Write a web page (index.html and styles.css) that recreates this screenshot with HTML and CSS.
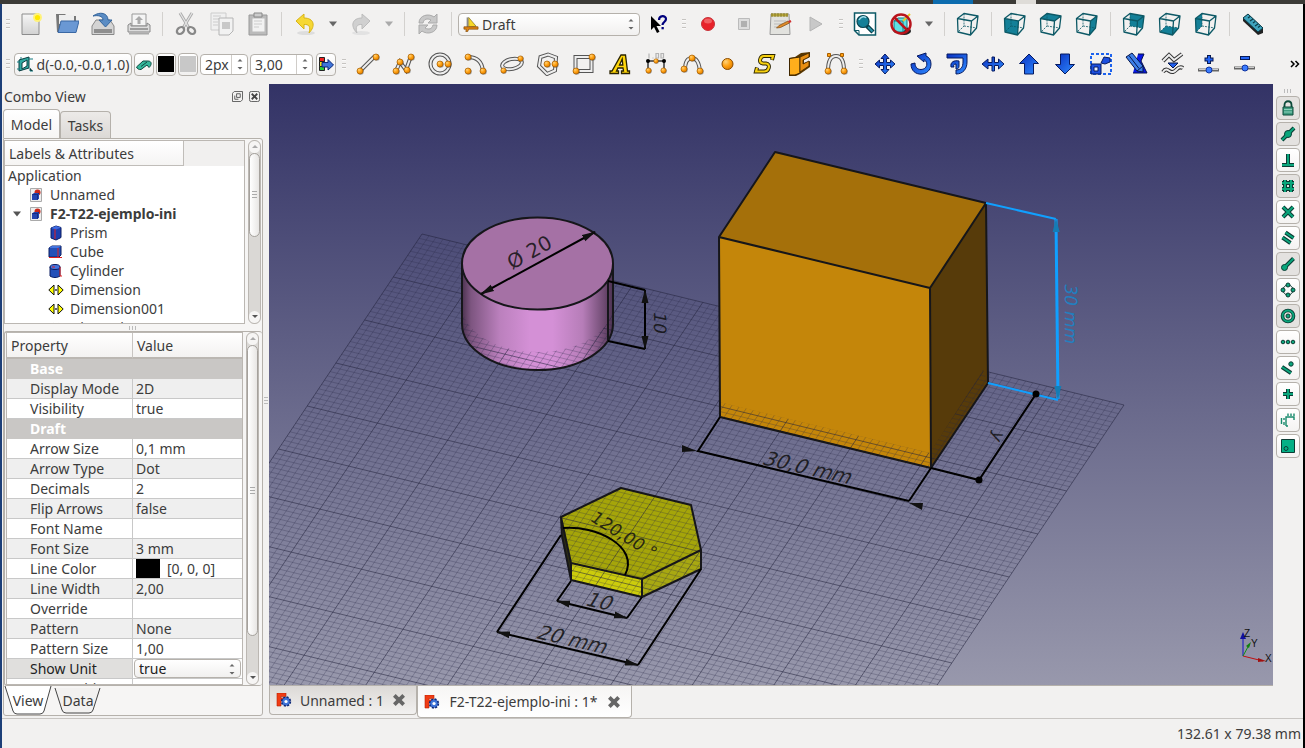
FILE: index.html
```html
<!DOCTYPE html>
<html lang="en">
<head>
<meta charset="utf-8">
<title>FreeCAD</title>
<link rel="stylesheet" href="styles.css">
</head>
<body>
<svg class="defs" aria-hidden="true">
  <defs>
    <radialGradient id="or" cx=".35" cy=".3" r=".8"><stop offset="0" stop-color="#ffd27a"/><stop offset=".5" stop-color="#ffa010"/><stop offset="1" stop-color="#d87800"/></radialGradient>
    <linearGradient id="blu" x1="0" y1="0" x2="1" y2="1"><stop offset="0" stop-color="#0a2fc0"/><stop offset="1" stop-color="#2f8cff"/></linearGradient>
    <linearGradient id="gry" x1="0" y1="0" x2="0" y2="1"><stop offset="0" stop-color="#f6f6f6"/><stop offset="1" stop-color="#d2d2d2"/></linearGradient>
    <linearGradient id="cylS" x1="0" y1="0" x2="1" y2="0"><stop offset="0" stop-color="#4c3350"/><stop offset=".06" stop-color="#7d5580"/><stop offset=".25" stop-color="#bb80bd"/><stop offset=".45" stop-color="#d490d6"/><stop offset=".6" stop-color="#d490d6"/><stop offset=".8" stop-color="#b67db8"/><stop offset=".94" stop-color="#6f4b72"/><stop offset="1" stop-color="#4a3150"/></linearGradient>
    <linearGradient id="sky" x1="0" y1="0" x2="0" y2="1"><stop offset="0" stop-color="#333366"/><stop offset="1" stop-color="#9898ac"/></linearGradient>
    <symbol id="node" viewBox="0 0 8 8"><circle cx="4.600" cy="4.600" r="3.200" fill="#333" opacity=".45"/><circle cx="4" cy="4" r="3" fill="url(#or)" stroke="#a85e00" stroke-width=".7"/></symbol>
    <symbol id="wire" viewBox="0 0 24 24"><path d="M8 1.500V14L2 20M8 14l13 2" fill="none" stroke="#0d5966" stroke-width=".8" stroke-dasharray="2 1"/><path d="M1.500 6.500L8 1.500L22 4L20.500 16L14.500 23L2 20ZM1.500 6.500L15.500 9L22 4M15.500 9L14.500 23" fill="none" stroke="#0d5966" stroke-width="1.300" stroke-linejoin="round"/></symbol>
    <symbol id="doc" viewBox="0 0 14 14"><path d="M1.500.5h11v13h-11z" fill="#eee" stroke="#aaa"/><circle cx="8.500" cy="4.500" r="3" fill="#c8281c"/><path d="M3 6.500l2-1.500h5v5.500L8.500 12H3z" fill="#2444b0"/><path d="M3 6.500h5.500V12M8.500 6.500L10 5" fill="none" stroke="#0d2270" stroke-width=".7"/></symbol>
    <symbol id="dim" viewBox="0 0 16 12"><path d="M6 1v10L.800 6zM10 1v10l5.200-5z" fill="#ff0" stroke="#111"/><path d="M7.200 5.200h1.600v1.600H7.200z"/></symbol>
    <symbol id="fc" viewBox="0 0 16 14"><path d="M1 0h9v3.500H5V5h4v3H5v5H1z" fill="#f03c14" stroke="#b82000" stroke-width=".6"/><circle cx="10" cy="8.500" r="4.200" fill="#2a55c0" stroke="#0c2878" stroke-width="2" stroke-dasharray="2 1.300"/><circle cx="10" cy="8.500" r="3.600" fill="#3f74d8"/><circle cx="10" cy="8.500" r="1.600" fill="#fff"/></symbol>
    <symbol id="x" viewBox="0 0 12 12"><path d="M2 2l8 8M10 2l-8 8" stroke="#666" stroke-width="3.200"/></symbol>
    <symbol id="updown" viewBox="0 0 8 12"><path d="M1.500 3.500L4 1l2.500 2.500zM1.500 9L4 11.500 6.500 9z" fill="#666"/></symbol>
    <symbol id="down" viewBox="0 0 8 6"><path d="M0 .5h8L4 5.500z"/></symbol>
    <path id="k-near" d="M2 14L14 2"/>
    <path id="k-perp" d="M8 2v11M2 13h12"/>
    <path id="k-grid" d="M5 2v12M11 2v12M2 5h12M2 11h12"/>
    <path id="k-int" d="M3 3l10 10M13 3L3 13"/>
    <path id="k-par" d="M5.500 2.500l8 5.500M2.500 7.500l8 5.500"/>
    <path id="k-end" d="M5 11L13.500 2.500"/>
    <path id="k-plus" d="M8 3v10M3 8h10"/>
    <path id="k-ext" d="M2 7l9 6"/>
  </defs>
</svg>
<div class="edge-top"></div>
<div class="frame">
<div class="window">
<header class="bars">
  <div class="bar">
    <span class="grip"></span>
    <button class="tb" aria-label="New"><svg viewBox="0 0 24 24"><path d="M3 2h17v20.500H3z" fill="url(#gry)" stroke="#8c8c8c"/><circle cx="18.500" cy="5.500" r="4.500" fill="#fff27a"/><circle cx="18.500" cy="5.500" r="2.600" fill="#ffe800"/></svg></button>
    <button class="tb" aria-label="Open"><svg viewBox="0 0 24 24"><path d="M1 2h9l2 2h9v16H2z" fill="#777"/><path d="M4 3h15v9H4z" fill="#eee"/><path d="M3 20.500l3-11.500h18l-3 11.500z" fill="#6a98d4" stroke="#3a68a4"/></svg></button>
    <button class="tb" aria-label="Save"><svg viewBox="0 0 24 24"><path d="M1 14l4-6h14l4 6v8.500H1z" fill="#d4d4d4" stroke="#888"/><path d="M3 17h18v4H3z" fill="#8f8f8f"/><path d="M2 4C9-1 17 1 17 8h4l-6.500 7L8 8h4C12 4 7 3 2 4z" fill="#5a8cc4" stroke="#34659c"/></svg></button>
    <button class="tb" aria-label="Print"><svg viewBox="0 0 24 24"><path d="M5 2h14v12H5z" fill="#f4f4f4" stroke="#999"/><path d="M12 4l4 4h-2.500v4h-3V8H8z" fill="#aaa"/><path d="M1 13l3-2v3h16v-3l3 2v7H1z" fill="#ddd" stroke="#888"/><path d="M3 17h18" stroke="#888" stroke-width="1.500"/><path d="M2 20.500h20v2H2z" fill="#aaa"/></svg></button>
    <span class="sep"></span>
    <button class="tb" aria-label="Cut"><svg viewBox="0 0 24 24"><path d="M6 1l9 15M18 1L9 16" stroke="#aaa" stroke-width="3"/><path d="M6 1l9 15M18 1L9 16" stroke="#e6e6e6" stroke-width="1.200"/><ellipse cx="6.500" cy="18.500" rx="4" ry="3" fill="none" stroke="#888" stroke-width="2.300" transform="rotate(-40 6.500 18.500)"/><ellipse cx="17.500" cy="18.500" rx="4" ry="3" fill="none" stroke="#888" stroke-width="2.300" transform="rotate(40 17.500 18.500)"/></svg></button>
    <button class="tb" aria-label="Copy"><svg viewBox="0 0 24 24"><path d="M1 1h15v17H1z" fill="#f0f0f0" stroke="#ccc"/><path d="M3 4h8M3 7h6M3 10h5M3 13h5" stroke="#ccc"/><path d="M9 6h14v13l-4 4H9z" fill="#f2f2f2" stroke="#b4b4b4"/><path d="M12 10h8v7h-8z" fill="#c8c8c8"/></svg></button>
    <button class="tb" aria-label="Paste"><svg viewBox="0 0 24 24"><path d="M3 3h18v20H3z" fill="#bbb" stroke="#999"/><path d="M6 6h13v14H6z" fill="#f2f2f2" stroke="#bbb"/><path d="M8 9h8M8 12h8M8 15h5" stroke="#ccc"/><path d="M8 1h8v4H8z" fill="#ccc" stroke="#888"/></svg></button>
    <span class="sep"></span>
    <button class="tb" aria-label="Undo"><svg viewBox="0 0 24 24"><ellipse cx="13" cy="21" rx="9" ry="2" fill="#ddd"/><path d="M3 9l8-7v4c10 0 12 8 5 15 2-6 0-9-5-8.500V17z" fill="#f6d834" stroke="#d8b418"/></svg></button>
    <button class="drop" aria-label="Undo list"><svg viewBox="0 0 8 6"><use href="#down"/></svg></button>
    <button class="tb" aria-label="Redo"><svg viewBox="0 0 24 24"><ellipse cx="12" cy="21" rx="9" ry="2" fill="#e2e2e2"/><path d="M21 9l-8-7v4C3 6 1 14 8 21c-2-6 0-9 5-8.500V17z" fill="#d0d0d0" stroke="#bcbcbc"/></svg></button>
    <button class="drop off" aria-label="Redo list"><svg viewBox="0 0 8 6"><use href="#down"/></svg></button>
    <span class="sep"></span>
    <button class="tb" aria-label="Refresh"><svg viewBox="0 0 24 24"><path d="M3 11C3 3 13 1 18 5l3-3v9h-9l3-3c-4-2-7-1-8 3zM21 13c0 8-10 10-15 6l-3 3v-9h9l-3 3c4 2 7 1 8-3z" fill="#c8c8c8" stroke="#aaa"/></svg></button>
    <span class="sep"></span>
    <div class="combo"><svg class="i16" viewBox="0 0 17 16"><path d="M4.500 1v12" stroke="#555"/><path d="M6 11V1l8 9.500z" fill="#f7d827" stroke="#6b5500" stroke-width=".6"/><path d="M1 11h15v2.500H6L5 16H3l.5-2.500H1z" fill="#e08414" stroke="#7a4300" stroke-width=".7"/></svg><select aria-label="Workbench"><option>Draft</option></select><svg class="ud" viewBox="0 0 8 12"><use href="#updown"/></svg></div>
    <button class="tb" aria-label="What's this"><svg viewBox="0 0 24 24"><path d="M4 4v14l3-3 3 6 2.500-1.200L9.500 14H14z" fill="#000"/><path d="M12 8c0-5 7-5 7-1 0 3-3.500 3-3.500 6" fill="none" stroke="#00007d" stroke-width="2.200"/><path d="M14.500 15h2.300v2.300h-2.300z" fill="#00007d"/></svg></button>
    <span class="grip"></span>
    <button class="tb" aria-label="Record"><svg viewBox="0 0 24 24"><circle cx="12" cy="12" r="6.500" fill="#e8222a" stroke="#c8343a"/><ellipse cx="12" cy="9" rx="4" ry="2.500" fill="#f47a7a" opacity=".7"/></svg></button>
    <button class="tb" aria-label="Stop"><svg viewBox="0 0 24 24"><path d="M6.500 6.500h11v11h-11z" fill="#ddd" stroke="#bbb"/><path d="M9 9h6v6H9z" fill="#b0b0b0"/></svg></button>
    <button class="tb" aria-label="Macros"><svg viewBox="0 0 24 24"><path d="M3 2h18l1 20.500H2z" fill="#e2e2de" stroke="#999"/><path d="M3 1.500h17v3H3z" fill="#b8a83a"/><path d="M4 1v4M7 1v4M10 1v4M13 1v4M16 1v4M19 1v4" stroke="#6e6420" stroke-width=".7"/><path d="M6 9h12M6 12h9M6 15h3" stroke="#bbb"/><path d="M8.500 16l2.500-2.500L20 9l1.500 2-9 4.500z" fill="#e08a28" stroke="#7a4a14" stroke-width=".7"/><path d="M20 9l2.500-1 1 2-2 1z" fill="#d03030"/></svg></button>
    <button class="tb" aria-label="Run macro"><svg viewBox="0 0 24 24"><path d="M6 5l12 7-12 7z" fill="#c8c8c8" stroke="#b4b4b4"/></svg></button>
    <span class="grip"></span>
    <button class="tb" aria-label="Fit all"><svg viewBox="0 0 24 24"><path d="M1.500 1h21v22H6l-4.500-4.500z" fill="#fff" stroke="#0d5966" stroke-width="1.500"/><path d="M1.500 18.500H6V23" fill="none" stroke="#0d5966"/><path d="M14 14l6 6" stroke="#063d48" stroke-width="4.500"/><path d="M15 15l4.500 4.500" stroke="#2a93a8" stroke-width="2"/><circle cx="10" cy="9.500" r="6" fill="#148098" stroke="#0a4652" stroke-width="1.200"/><path d="M6 8c2-4 6-4 7-2" fill="none" stroke="#a0dbe8" stroke-width="1.500"/></svg></button>
    <button class="tb" aria-label="Draw style"><svg viewBox="0 0 24 24"><ellipse cx="15" cy="19" rx="7" ry="4" fill="#222"/><path d="M5 9l4-3h9v10l-4 4H5z" fill="#5fe0e4" stroke="#127a84"/><path d="M5 9h9v11" fill="none" stroke="#127a84"/><path d="M14 9l7-7" stroke="#e8c828" stroke-width="2"/><circle cx="12" cy="12" r="9.500" fill="none" stroke="#b8141c" stroke-width="2.500"/><path d="M5.500 5.500l13 13" stroke="#b8141c" stroke-width="2.500"/></svg></button>
    <button class="drop" aria-label="Draw style list"><svg viewBox="0 0 8 6"><use href="#down"/></svg></button>
    <span class="sep"></span>
    <button class="tb" aria-label="Axonometric"><svg viewBox="0 0 24 24"><use href="#wire"/></svg></button>
    <span class="sep"></span>
    <button class="tb" aria-label="Front"><svg viewBox="0 0 24 24"><path class="face" d="M1.500 6.500l14 2.500-1 14L2 20z"/><use href="#wire"/></svg></button>
    <button class="tb" aria-label="Top"><svg viewBox="0 0 24 24"><path class="face" d="M1.500 6.500L8 1.500 22 4l-6.500 5z"/><use href="#wire"/></svg></button>
    <button class="tb" aria-label="Right"><svg viewBox="0 0 24 24"><path class="face" d="M15.500 9L22 4l-1.500 12-6 7z"/><use href="#wire"/></svg></button>
    <span class="sep"></span>
    <button class="tb" aria-label="Rear"><svg viewBox="0 0 24 24"><path class="face" d="M8 1.500L22 4l-1.500 12L8 14z"/><use href="#wire"/></svg></button>
    <button class="tb" aria-label="Bottom"><svg viewBox="0 0 24 24"><path class="face" d="M2 20l6-6 12.500 2-6 7z"/><use href="#wire"/></svg></button>
    <button class="tb" aria-label="Left"><svg viewBox="0 0 24 24"><path class="face" d="M1.500 6.500L8 1.500V14l-6 6z"/><use href="#wire"/></svg></button>
    <span class="sep"></span>
    <button class="tb" aria-label="Measure"><svg viewBox="0 0 24 24"><path d="M2 6l5-4 15 14v5l-5 2L2 9z" fill="#222"/><path d="M2 6l5-4 15 14-5 4z" fill="#3fa3bd" stroke="#0b3c48"/><path d="M9 4.500L7 6M12 7l-3 2M14 9.500l-2 1.500M17 12l-3 2M19 14l-2 1.500" stroke="#0b3c48" stroke-width="1.200"/></svg></button>
  </div>
  <div class="bar">
    <span class="grip"></span>
    <div class="tray">
    <button class="btn plane"><svg class="i16" viewBox="0 0 16 16"><path d="M2 4l10-3v11L2 15z" fill="#2fa9a0" stroke="#0a3c40"/><path d="M5 7l5-3v6l-5 3z" fill="#fff" stroke="#0a3c40"/><path d="M0 6h3M12 3h4M0 13h3M13 12v3h3M4 1v2" stroke="#127a80"/></svg>d(-0.0,-0.0,1.0)</button>
    <button class="btn sq" aria-label="Construction"><svg class="i16" viewBox="0 0 16 16"><path d="M.500 11L7 5h5c4 0 4 4 1 6.500L11 9l-6 4.500c-2 .5-4-1-4.500-2.500z" fill="#35b89c" stroke="#0d4a40"/><path d="M5 10.500L11 6" stroke="#0d4a40"/></svg></button>
    <button class="btn sq" aria-label="Line color"><span class="sw black"></span></button>
    <button class="btn sq" aria-label="Face color"><span class="sw grey"></span></button>
    <div class="spin s1"><input aria-label="Line width" value="2px"><svg class="ud" viewBox="0 0 8 12"><use href="#updown"/></svg></div>
    <div class="spin s2"><input aria-label="Text size" value="3,00"><svg class="ud" viewBox="0 0 8 12"><use href="#updown"/></svg></div>
    <button class="btn sq" aria-label="Apply style"><svg class="i16" viewBox="0 0 16 16"><path d="M1.500 1.500h5v4h-5z" fill="#f02020" stroke="#222"/><path d="M1.500 5.500h5v5h-5z" fill="#f5e020" stroke="#222"/><path d="M1.500 10.500h5v4h-5z" fill="#28c838" stroke="#222"/><path d="M4 6.500h6V3.500L15.500 9 10 14v-3H4z" fill="#3f74d8" stroke="#0c2878"/></svg></button>
    </div>
    <span class="grip"></span>
    <button class="tb" aria-label="Line"><svg viewBox="0 0 24 24"><path class="w" d="M4 19L19 4"/><path class="wi" d="M4 19L19 4"/><use href="#node" x="0" y="15" width="8" height="8"/><use href="#node" x="16" y="1" width="8" height="8"/></svg></button>
    <button class="tb" aria-label="Wire"><svg viewBox="0 0 24 24"><path class="w" d="M4 19l4-9 6 8 5-14"/><path class="wi" d="M4 19l4-9 6 8 5-14"/><use href="#node" y="15" width="8" height="8"/><use href="#node" x="4" y="6" width="8" height="8"/><use href="#node" x="11" y="14" width="8" height="8"/><use href="#node" x="15" y="1" width="8" height="8"/></svg></button>
    <button class="tb" aria-label="Circle"><svg viewBox="0 0 24 24"><circle class="w" cx="12" cy="12" r="9.500"/><circle class="wi" cx="12" cy="12" r="9.500"/><use href="#node" x="8" y="8" width="8" height="8"/><use href="#node" x="16" y="8" width="8" height="8"/></svg></button>
    <button class="tb" aria-label="Arc"><svg viewBox="0 0 24 24"><path class="w" d="M4 5c9 0 14 5 15 14"/><path class="wi" d="M4 5c9 0 14 5 15 14"/><use href="#node" x="0" y="1" width="8" height="8"/><use href="#node" x="0" y="15" width="8" height="8"/><use href="#node" x="15" y="15" width="8" height="8"/></svg></button>
    <button class="tb" aria-label="Ellipse"><svg viewBox="0 0 24 24"><ellipse class="w" cx="12" cy="12" rx="10" ry="5" transform="rotate(-12 12 12)"/><ellipse class="wi" cx="12" cy="12" rx="10" ry="5" transform="rotate(-12 12 12)"/><use href="#node" x="0" y="15" width="7" height="7"/><use href="#node" x="17" y="3" width="7" height="7"/></svg></button>
    <button class="tb" aria-label="Polygon"><svg viewBox="0 0 24 24"><path class="w" d="M12 2.500l8 3-1 13-8 3.500-8-8 1.500-9z"/><path class="wi" d="M12 2.500l8 3-1 13-8 3.500-8-8 1.500-9z"/><use href="#node" x="7" y="8" width="8" height="8"/><use href="#node" x="15" y="8" width="8" height="8"/></svg></button>
    <button class="tb" aria-label="Rectangle"><svg viewBox="0 0 24 24"><path class="w" d="M3.500 5h16v14h-16z"/><path class="wi" d="M3.500 5h16v14h-16z"/><use href="#node" x="0" y="15" width="8" height="8"/><use href="#node" x="16" y="1" width="8" height="8"/></svg></button>
    <button class="tb" aria-label="Text"><svg viewBox="0 0 24 24"><path d="M2 19h2L13 3h4.500l2 16h2v2.500h-8V19h2l-.5-3H10l-1.500 3h2v2.500H2zM11.500 13h3.300l-.6-6z" fill="#ffd60a" fill-rule="evenodd" stroke="#2a2300" stroke-width="1.300"/></svg></button>
    <button class="tb" aria-label="Dimension"><svg viewBox="0 0 24 24"><path d="M4 20V9h16v11" fill="none" stroke="#666" stroke-width="2"/><path d="M5 1.500v5M8.500 6h1M12 1.500h2.500v4.500H12zM17 1.500h2.500v4.500H17z" fill="none" stroke="#b4b4b4" stroke-width="1.200"/><circle cx="4" cy="9" r="2"/><circle cx="20" cy="9" r="2"/><use href="#node" x="1" y="15" width="7" height="7"/><use href="#node" x="16" y="15" width="7" height="7"/><use href="#node" x="9" y="6" width="6" height="6"/></svg></button>
    <button class="tb" aria-label="B-spline"><svg viewBox="0 0 24 24"><path class="w" d="M5 18C5 9 8 6 12 6s7 4 8 13"/><path class="wi" d="M5 18C5 9 8 6 12 6s7 4 8 13"/><use href="#node" x="0" y="13" width="8" height="8"/><use href="#node" x="8" y="2" width="8" height="8"/><use href="#node" x="16" y="15" width="8" height="8"/></svg></button>
    <button class="tb" aria-label="Point"><svg viewBox="0 0 24 24"><circle cx="11.500" cy="12" r="5.500" fill="url(#or)" stroke="#8a4c00"/></svg></button>
    <button class="tb" aria-label="Shape string"><svg viewBox="0 0 24 24"><path d="M20 8l1-4H12C8 4 6 11 11 11.500h3c5 .5 3 8-2 8H4l1-4" fill="none" stroke="#2a2300" stroke-width="4"/><path d="M20 7.500l1-3.500H12C8 4 6 11 11 11.500h3c5 .5 3 8-2 8H4l1-3.500" fill="none" stroke="#f5cf10" stroke-width="2.200"/></svg></button>
    <button class="tb" aria-label="Facebinder"><svg viewBox="0 0 24 24"><path d="M1 6l6-1 6-4 9-1v5l-6 3v3l6-2v6l-10 7-4 2H1z" fill="#5a3800"/><path d="M1.500 6.500L12 5v16l-5 2H1.500z" fill="#ffae1c" stroke="#3f2600"/><path d="M12 5l9-4v4l-6 3v4l6-3v5l-9 6z" fill="#e88e10" stroke="#3f2600" stroke-width=".8"/></svg></button>
    <button class="tb" aria-label="Bezier"><svg viewBox="0 0 24 24"><path d="M5 3.500h14" stroke="#777" stroke-dasharray="2 1"/><path class="w" d="M4 19C4 9 7 4 12 4s8 5 8 15"/><path class="wi" d="M4 19C4 9 7 4 12 4s8 5 8 15"/><path d="M3.500 1.500h3v3h-3zM16.500 1.500h3v3h-3z" fill="#ffa010" stroke="#a85e00"/><use href="#node" x="0" y="15" width="8" height="8"/><use href="#node" x="16" y="15" width="8" height="8"/></svg></button>
    <span class="grip"></span>
    <button class="tb m" aria-label="Move"><svg viewBox="0 0 24 24"><path d="M12 2l4 4.500h-2.500v4h4V8L22 12l-4.500 4v-2.500h-4v4H16L12 22l-4-4.500h2.500v-4h-4V16L2 12l4.500-4v2.500h4v-4H8z"/></svg></button>
    <button class="tb m" aria-label="Rotate"><svg viewBox="0 0 24 24"><path d="M2 12c0 14 20 13 20 0 0-4-2-7-5-8V1L8 4l7 6V7.500c5 3 3 10-3 10-4 0-6-3-6-6.500z"/></svg></button>
    <button class="tb m" aria-label="Offset"><svg viewBox="0 0 24 24"><path d="M2 2h20v8c0 7-4 12-11 12v-4c5 0 7-3 7-8V6H2zM6 15c-1-5 3-7 8-6v5c0 2-1 3-3 3v-5c-2 0-3 1-2 3z"/></svg></button>
    <button class="tb m" aria-label="Trimex"><svg viewBox="0 0 24 24"><path d="M1 12l6-5v3.500h4V5h2.500v5.500h4V7L23 12l-5.500 5v-3.500h-4V19H11v-5.500H7V17z"/></svg></button>
    <button class="tb m" aria-label="Upgrade"><svg viewBox="0 0 24 24"><path d="M12 2l9.500 9.500h-5V22h-9V11.500h-5z"/></svg></button>
    <button class="tb m" aria-label="Downgrade"><svg viewBox="0 0 24 24"><path d="M12 22l9.500-9.500h-5V2h-9v10.500h-5z"/></svg></button>
    <button class="tb" aria-label="Scale"><svg viewBox="0 0 24 24"><path d="M2 2h20v20H2z" fill="none" stroke="#1c62ee" stroke-width="2" stroke-dasharray="3 2"/><path d="M2 12h10v10H2z" fill="#1c4fe0" stroke="#071a60"/><path d="M5 15h4v4H5z" fill="#e8eefc" stroke="#071a60"/><path d="M12 11l3-6 6 1v4l-5 2z" fill="#1c4fe0" stroke="#071a60"/></svg></button>
    <button class="tb" aria-label="Edit"><svg viewBox="0 0 24 24"><path d="M13 2h6l-3 7 6 12H8" fill="#0818e8" stroke="#05104a"/><path d="M1 5l6-4 11 13v6l-6-1z" fill="#3d7fe8" stroke="#06164a"/><path d="M4 3.500l10 13M12 19l6-5" stroke="#06164a"/></svg></button>
    <button class="tb" aria-label="Wire to B-spline"><svg viewBox="0 0 24 24"><path d="M2 9l6-6 5 5 8-6M2 20c4-6 6 1 10 0s5-7 10-4" fill="none" stroke="#333" stroke-width="4"/><path d="M2 9l6-6 5 5 8-6M2 20c4-6 6 1 10 0s5-7 10-4" fill="none" stroke="#eee" stroke-width="2"/><path d="M7 11h10l-5 5z" fill="#2060f0" stroke="#06164a"/></svg></button>
    <button class="tb" aria-label="Add point"><svg viewBox="0 0 24 24"><path d="M12 3v9M7.500 7.500h9" stroke="#06164a" stroke-width="4"/><path d="M12 4v7M8.500 7.500h7" stroke="#2464f4" stroke-width="2.200"/><path d="M1 18h21" stroke="#666" stroke-width="3"/><path d="M2 17.500h19" stroke="#ccc"/><circle cx="12" cy="18" r="3" fill="#3a7cff" stroke="#1034a0"/></svg></button>
    <button class="tb" aria-label="Remove point"><svg viewBox="0 0 24 24"><path d="M7 6h10" stroke="#06164a" stroke-width="4"/><path d="M8 6h8" stroke="#2464f4" stroke-width="2.200"/><path d="M1 16h21" stroke="#666" stroke-width="3"/><path d="M2 15.500h19" stroke="#ccc"/><circle cx="12" cy="16" r="3" fill="#3a7cff" stroke="#1034a0"/></svg></button>
    <button class="more" aria-label="More tools"><svg viewBox="0 0 10 8"><path d="M1 1l3 3-3 3M5.500 1l3 3-3 3" fill="none" stroke="#000" stroke-width="1.500"/></svg></button>
  </div>
</header>
<main class="main">
  <aside class="dock">
    <div class="dock-title"><h1>Combo View</h1>
      <button aria-label="Float"><svg viewBox="0 0 12 12"><path d="M.5 2.500l2-2h9v9l-2 2h-9zM5 3h4v4H5zM3 5v4h4" fill="none" stroke="#555"/></svg></button>
      <button aria-label="Close"><svg viewBox="0 0 12 12"><rect x=".5" y=".5" width="11" height="11" rx="2" fill="none" stroke="#555"/><path d="M3 3l6 6M9 3L3 9" stroke="#444" stroke-width="2"/></svg></button></div>
    <div class="tabs"><button class="tab on">Model</button><button class="tab">Tasks</button></div>
    <div class="pane">
      <div class="treebox">
        <div class="tree">
          <div class="tree-head"><span>Labels &amp; Attributes</span></div>
          <ul>
            <li>Application</li>
            <li class="l1"><svg class="i14" viewBox="0 0 14 14"><use href="#doc"/></svg>Unnamed</li>
            <li class="l1 cur"><svg class="tri" viewBox="0 0 8 6"><use href="#down"/></svg><svg class="i14" viewBox="0 0 14 14"><use href="#doc"/></svg>F2-T22-ejemplo-ini</li>
            <li class="l2"><svg class="i16" viewBox="0 0 16 16"><path d="M3 3l5-2 5 1.500v10L8 15l-5-2z" fill="#1c3fae" stroke="#0a1c60"/><path d="M3 3l5 1.500 5-2L8 1z" fill="#3f6ae0"/><path d="M7 4v10" stroke="#e02020"/></svg>Prism</li>
            <li class="l2"><svg class="i16" viewBox="0 0 16 16"><path d="M1 4l3-2h9v9l-2 2H1z" fill="#2350b8" stroke="#0a1c60"/><path d="M1 4h9l3-2H4z" fill="#4474e0"/><path d="M10 4v9M1 13.500h13" stroke="#e02020"/></svg>Cube</li>
            <li class="l2"><svg class="i16" viewBox="0 0 16 16"><path d="M2 4v9c3 2 7 2 10 0V4z" fill="#2350b8" stroke="#0a1c60"/><ellipse cx="7" cy="4" rx="5" ry="2.500" fill="#4474e0" stroke="#0a1c60"/><path d="M4 4h3M12 4v9h2" fill="none" stroke="#e02020"/></svg>Cylinder</li>
            <li class="l2"><svg class="i16" viewBox="0 0 16 12"><use href="#dim"/></svg>Dimension</li>
            <li class="l2"><svg class="i16" viewBox="0 0 16 12"><use href="#dim"/></svg>Dimension001</li>
            <li class="l2"><svg class="i16" viewBox="0 0 16 12"><use href="#dim"/></svg>Dimension002</li>
          </ul>
        </div>
        <div class="scroll"><i class="cap up"></i><i class="thumb short"></i><i class="cap dn"></i></div>
      </div>
      <div class="hgrip"></div>
      <div class="propbox">
        <div class="props">
        <table>
          <thead><tr><th>Property</th><th>Value</th></tr></thead>
          <tbody>
            <tr class="grp"><td colspan="2">Base</td></tr>
            <tr class="alt"><td>Display Mode</td><td>2D</td></tr>
            <tr><td>Visibility</td><td>true</td></tr>
            <tr class="grp"><td colspan="2">Draft</td></tr>
            <tr><td>Arrow Size</td><td>0,1 mm</td></tr>
            <tr class="alt"><td>Arrow Type</td><td>Dot</td></tr>
            <tr><td>Decimals</td><td>2</td></tr>
            <tr class="alt"><td>Flip Arrows</td><td>false</td></tr>
            <tr><td>Font Name</td><td></td></tr>
            <tr class="alt"><td>Font Size</td><td>3 mm</td></tr>
            <tr><td>Line Color</td><td><span class="chip"></span>[0, 0, 0]</td></tr>
            <tr class="alt"><td>Line Width</td><td>2,00</td></tr>
            <tr><td>Override</td><td></td></tr>
            <tr class="alt"><td>Pattern</td><td>None</td></tr>
            <tr><td>Pattern Size</td><td>1,00</td></tr>
            <tr class="sel"><td>Show Unit</td><td><div class="cell"><select aria-label="Show Unit"><option>true</option></select><svg class="ud" viewBox="0 0 8 12"><use href="#updown"/></svg></div></td></tr>
            <tr><td>Text Position</td><td>[0,0 0,0 0,0]</td></tr>
          </tbody>
        </table>
        </div>
        <div class="scroll"><i class="cap up"></i><i class="thumb long"></i><i class="cap dn"></i></div>
      </div>
      <div class="btabs">
        <button class="bt on"><svg viewBox="0 0 48 29"><path d="M1 0l8 25q1 3 4 3h23q3 0 4-3L47 0" fill="#fff" stroke="#444"/></svg><span>View</span></button>
        <button class="bt"><svg viewBox="0 0 48 29"><path d="M1 2l7 22q1 3 4 3h23q3 0 4-3l7-22" fill="#f2f1f0" stroke="#444"/></svg><span>Data</span></button>
      </div>
    </div>
  </aside>
  <div class="vsplit"></div>
  <section class="work">
    <svg class="view" viewBox="269 84 1004 601" preserveAspectRatio="xMidYMid slice" role="img" aria-label="3D view">
      <defs>
        <g id="grid"><path id="minor" class="minor"/><path id="major" class="major"/></g>
        <clipPath id="cBox"><path d="M719 402L930 453 983 370 988 383 931 468 720 417z"/></clipPath>
        <clipPath id="cCyl"><path d="M462 324A75.500 46 0 0 0 613 324V306A75.500 46 0 0 1 462 306z"/></clipPath>
        <clipPath id="cHex"><path d="M561 517L621 488 691 505 701 550V569L642 597 571 580z"/></clipPath>
        <marker id="ah" markerUnits="userSpaceOnUse" markerWidth="14" markerHeight="8" refX="13" refY="4" orient="auto-start-reverse"><path class="tip" d="M0 .5L14 4 0 7.500z"/></marker>
        <marker id="ab" markerUnits="userSpaceOnUse" markerWidth="14" markerHeight="8" refX="13" refY="4" orient="auto-start-reverse"><path class="tip blue-tip" d="M0 .5L14 4 0 7.500z"/></marker>
      </defs>
      <rect x="-731" y="84" width="3004" height="601" fill="url(#sky)"/>
      <use href="#grid"/>
      <g class="solid">
        <path d="M462 263V324A75.500 46 0 0 0 613 324V263z" fill="url(#cylS)"/>
        <use href="#grid" clip-path="url(#cCyl)"/>
        <path class="e" d="M462 263V324A75.500 46 0 0 0 613 324V263M608 281V342"/>
        <ellipse class="e" cx="537.500" cy="263.500" rx="75.500" ry="46" fill="#a571a5"/>
        <path d="M719 237L930 288 931 468 720 417z" fill="#c4860a"/>
        <path d="M930 288L986 203 988 383 931 468z" fill="#573b0a"/>
        <path d="M719 237L775 152 986 203 930 288z" fill="#a5700a"/>
        <use href="#grid" clip-path="url(#cBox)"/>
        <path class="e" d="M719 237L775 152 986 203 988 383 931 468 720 417zL930 288 986 203M930 288L931 468"/>
        <path d="M561 517L571 563V580L563 540z" fill="#2d2d12"/>
        <path d="M561 517L621 488 691 505 701 550 642 579 571 563z" fill="#a5a50a"/>
        <path d="M571 563L642 579V597L571 580z" fill="#cccc0c"/>
        <path d="M642 579L701 550V569L642 597z" fill="#a8a812"/>
        <use href="#grid" clip-path="url(#cHex)"/>
        <path class="e" d="M561 517L621 488 691 505 701 550 642 579 571 563zL562 536 571 580 642 597 701 569V550M642 579V597M571 563V580"/>
      </g>
      <g class="dims">
        <path d="M561 535L497 632M701 569L638 665M571 581L557 601M642 597L627 618M720 417L698 451H699M931 468L909 501M698 451L909 501M931 468L979 480 1036 394M608 281L645 290M608 341L645 349"/>
        <path class="ar" d="M497 632L638 665"/><path class="ar" d="M557 601L627 618"/><path class="ar" d="M645 290V349"/><path class="ar" d="M481 294L595 232"/>
        <path d="M563 528C595 525 640 546 625 575"/>
        <path class="f" d="M682 445L697 451 682 452zM909 503L923 503 922 510z"/>
      </g>
      <g class="blue"><path d="M986 203L1056 219M988 383L1058 400"/><path class="bar2" d="M1056 219L1058 399"/></g>
      <circle cx="1036" cy="394" r="3.500"/>
      <circle cx="979" cy="480" r="3.500"/>
      <g class="lab">
        <text class="t20" transform="translate(512 270) rotate(-29)">Ø 20</text>
        <text class="t17" transform="translate(654 311) rotate(90) skewX(-12)">10</text>
        <text class="t20" transform="translate(761 464) rotate(13) skewX(-18)">30,0 mm</text>
        <text class="t17" transform="translate(995 430) rotate(115)">y</text>
        <text class="t17" transform="translate(589 520) rotate(32) skewX(-8)">120,00 °</text>
        <text class="t20" transform="translate(584 605) rotate(13) skewX(-18)">10</text>
        <text class="t20" transform="translate(535 638) rotate(13) skewX(-18)">20 mm</text>
        <text class="t17 tb2" transform="translate(1065 283) rotate(90) skewX(-12)">30 mm</text>
      </g>
      <g class="axis"><path d="M1243 656V637" stroke="#1010c8"/><path d="M1243 656L1263 661" stroke="#c01010"/><path d="M1243 656L1249 645" stroke="#109010"/><path d="M1243 632l3 7h-6z" fill="#1010a0"/><path d="M1266 661l-8-3v4z" fill="#a01010"/><path d="M1251 642l-5 4 3 2z" fill="#108010"/><text x="1244" y="637">Z</text><text x="1251" y="647">Y</text><text x="1265" y="662">X</text></g>
    </svg>
    <div class="mdi">
      <button class="doc"><svg class="i16" viewBox="0 0 16 14"><use href="#fc"/></svg><span>Unnamed : 1</span><svg class="cx" viewBox="0 0 12 12"><use href="#x"/></svg></button>
      <button class="doc on"><svg class="i16" viewBox="0 0 16 14"><use href="#fc"/></svg><span>F2-T22-ejemplo-ini : 1*</span><svg class="cx" viewBox="0 0 12 12"><use href="#x"/></svg></button>
    </div>
  </section>
  <nav class="snap">
    <div class="hgrip"></div>
    <button class="dn" aria-label="Lock"><svg viewBox="0 0 16 16"><path d="M4.500 8V5c0-5 7-5 7 0v3" fill="none" stroke="#0c4a3a" stroke-width="1.800"/><path d="M3 7h10v8H3z" fill="#3f9c80" stroke="#0c4a3a"/><path d="M4 9.500h8M4 12h8" stroke="#8fd0bc"/></svg></button>
    <button class="dn" aria-label="Midpoint"><svg viewBox="0 0 16 16"><use class="so" href="#k-near"/><circle class="dot" cx="8" cy="8" r="3.500"/><use class="sg" href="#k-near"/></svg></button>
    <button aria-label="Perpendicular"><svg viewBox="0 0 16 16"><use class="so" href="#k-perp"/><use class="sg" href="#k-perp"/></svg></button>
    <button class="dn" aria-label="Grid"><svg viewBox="0 0 16 16"><use class="so" href="#k-grid"/><use class="sg" href="#k-grid"/></svg></button>
    <button aria-label="Intersection"><svg viewBox="0 0 16 16"><use class="so" href="#k-int"/><use class="sg" href="#k-int"/></svg></button>
    <button aria-label="Parallel"><svg viewBox="0 0 16 16"><use class="so" href="#k-par"/><use class="sg" href="#k-par"/></svg></button>
    <button class="dn" aria-label="Endpoint"><svg viewBox="0 0 16 16"><use class="so" href="#k-end"/><circle class="dot" cx="4.500" cy="11.500" r="3"/><use class="sg" href="#k-end"/></svg></button>
    <button aria-label="Angle"><svg viewBox="0 0 16 16"><circle cx="8" cy="8" r="5" fill="none" stroke="#0c3c34"/><circle class="dot" cx="8" cy="3" r="2"/><circle class="dot" cx="8" cy="13" r="2"/><circle class="dot" cx="3" cy="8" r="2"/><circle class="dot" cx="13" cy="8" r="2"/></svg></button>
    <button class="dn" aria-label="Center"><svg viewBox="0 0 16 16"><circle cx="8" cy="8" r="5.500" fill="none" stroke="#0c3c34" stroke-width="3.600"/><circle cx="8" cy="8" r="5.500" fill="none" stroke="#0aa67c" stroke-width="1.800"/><circle class="dot" cx="8" cy="8" r="2"/></svg></button>
    <button aria-label="Extension"><svg viewBox="0 0 16 16"><circle class="dot" cx="3" cy="8" r="1.800"/><circle class="dot" cx="8" cy="8" r="1.800"/><circle class="dot" cx="13" cy="8" r="1.800"/></svg></button>
    <button aria-label="Near"><svg viewBox="0 0 16 16"><use class="so" href="#k-ext"/><use class="sg" href="#k-ext"/><circle class="dot" cx="11" cy="4" r="2.200"/></svg></button>
    <button aria-label="Ortho"><svg viewBox="0 0 16 16"><use class="so" href="#k-plus"/><use class="sg" href="#k-plus"/></svg></button>
    <button aria-label="Dimensions"><svg viewBox="0 0 16 16"><path d="M6 14V5h8v3M6 14h2M1.500 6v6M4 6v2M4 10v3M8 1.500V4M11 1.500V4M14 1.500V4" fill="none" stroke="#178a6c" stroke-width="1.400"/></svg></button>
    <button aria-label="Working plane"><svg viewBox="0 0 16 16"><path d="M1.500 1.500h13v13h-13z" fill="#05b086" stroke="#0c3c34"/><circle cx="6" cy="10.500" r="2" fill="none" stroke="#0c3c34"/></svg></button>
  </nav>
</main>
<footer class="status">132.61 x 79.38 mm</footer>
</div>
</div>
<script src="grid.js"></script>
</body>
</html>
```
FILE: styles.css
```css
* { box-sizing: border-box; }
html, body { height: 100%; }
body {
  margin: 0;
  display: flex;
  flex-direction: column;
  background: #f2f1f0;
  color: #3c3c3c;
  font: 14px/19px "Noto Sans", "Open Sans", sans-serif;
  overflow: hidden;
}
button, input, select { font: inherit; color: inherit; }
button { border: 0; padding: 0; background: none; }
svg { display: block; flex: none; }
.defs { position: absolute; width: 0; height: 0; }
.edge-top {
  height: 4px;
  flex: none;
  background: linear-gradient(90deg, #3c3b37 933px, #0c6cae 933px, #0c6cae 973px, #3c3b37 973px, #3c3b37 1016px, #dedcd8 1016px, #dedcd8 1036px, #3c3b37 1036px);
}
.frame { flex: 1; min-height: 0; display: flex; border-left: 2px solid #1d3f78; border-right: 2px solid #000; }
.window { flex: 1; min-width: 0; display: flex; flex-direction: column; }

.bar { display: flex; align-items: center; height: 40px; }
.grip {
  width: 4px;
  height: 11px;
  margin: 0 4px 0 5px;
  flex: none;
  background: repeating-linear-gradient(#c6c4c1 0 1px, #fafafa 1px 2px, transparent 2px 4px);
}
.bar .grip:first-child { margin: 0 3px 0 4px; }
.tb { width: 36px; height: 36px; display: grid; place-items: center; flex: none; }
.tb svg { width: 24px; height: 24px; }
.sep { width: 1px; height: 24px; margin: 0 5px; background: #d3d1ce; flex: none; }
.drop { width: 20px; height: 36px; display: grid; place-items: center; flex: none; fill: #666; }
.drop svg { width: 8px; height: 6px; }
.drop.off { fill: #aaa; }
.i16 { width: 16px; height: 16px; }
.i14 { width: 14px; height: 14px; }
.ud { width: 8px; height: 12px; }
.combo, .btn, .spin, .cell {
  display: flex;
  align-items: center;
  border: 1px solid #b5b1ab;
  border-radius: 4px;
  background: linear-gradient(#fff, #f1f0ef);
}
.combo { width: 182px; height: 23px; margin: 0 1px; padding: 0 4px; gap: 3px; }
select { appearance: none; border: 0; background: none; padding: 0; flex: 1; min-width: 0; outline: 0; }
.face { fill: #148098; }
.w { fill: none; stroke: #555; stroke-width: 4; }
.wi { fill: none; stroke: #eee; stroke-width: 2; }
.m svg path { fill: url(#blu); stroke: #071a60; stroke-width: 1; }

.tray { display: flex; gap: 2px; padding: 0 1px; }
.btn { height: 23px; justify-content: center; }
.plane { width: 118px; gap: 4px; white-space: nowrap; }
.sq { width: 20px; }
.sw { width: 16px; height: 16px; }
.black { background: #000; }
.grey { background: #c8c8c8; }
.spin { height: 21px; align-self: center; background: #fff; padding-right: 3px; }
.spin input { border: 0; border-right: 1px solid #d0cdc9; background: none; min-width: 0; flex: 1; height: 19px; padding: 0 0 0 4px; margin-right: 4px; outline: 0; }
.s1 { width: 48px; }
.s2 { width: 63px; margin-right: 1px; }
.more { margin-left: auto; padding-right: 3px; }
.more svg { width: 10px; height: 8px; }

.main { flex: 1; min-height: 0; display: flex; }
.dock { width: 261px; flex: none; display: flex; flex-direction: column; padding: 0 0 2px 1px; }
.dock-title { height: 25px; display: flex; align-items: center; gap: 6px; padding-right: 3px; }
.dock-title h1 { margin: 0 auto 0 1px; font-size: 14px; font-weight: 400; }
.dock-title svg { width: 11px; height: 11px; }
.tabs { display: flex; align-items: flex-end; height: 29px; }
.tab { width: 51px; height: 27px; border: 1px solid #b5b1ab; border-bottom: 0; border-radius: 4px 4px 0 0; background: linear-gradient(#eceae8, #dcd9d6); }
.tab.on { width: 57px; height: 29px; background: linear-gradient(#fff, #f6f5f4); }
.pane { flex: 1; min-height: 0; display: flex; flex-direction: column; border: 1px solid #b5b1ab; border-radius: 0 3px 3px 3px; background: #f6f5f4; padding-top: 1px; }
.treebox { height: 184px; flex: none; display: flex; gap: 3px; }
.tree { width: 241px; border: 1px solid #bbb7b2; background: #fff; overflow: hidden; }
.tree-head { height: 25px; background: #f1f0ef; display: flex; }
.tree-head span { width: 179px; height: 25px; padding: 3px 4px; border-right: 1px solid #c0bdb9; border-bottom: 1px solid #c0bdb9; background: linear-gradient(#fff, #f5f4f3); }
.tree ul { list-style: none; margin: 0; padding: 0; }
.tree li { height: 19px; display: flex; align-items: center; padding-left: 3px; }
.tree .l1 { padding-left: 24px; gap: 7px; }
.tree .l2 { padding-left: 43px; gap: 6px; }
.tree .cur { font-weight: 700; padding-left: 8px; }
.tree .cur .tri { margin-right: 1px; }
.tri { width: 8px; height: 6px; fill: #555; }
.scroll { width: 13px; display: flex; flex-direction: column; border: 1px solid #bbb7b2; border-radius: 6px; background: #dad8d5; overflow: hidden; }
.scroll i { flex: none; }
.cap { height: 12px; background: #f6f5f4; border-radius: 6px; }
.cap::before { content: ""; display: block; width: 0; margin: 4px auto 0; border: 3px solid transparent; }
.cap.up::before { border-top: 0; border-bottom-color: #aaa; }
.cap.dn::before { border-bottom: 0; border-top-color: #555; }
.cap.dn { margin-top: auto; }
.thumb { border: 1px solid #a5a19c; border-radius: 6px; background: linear-gradient(90deg, #fff, #e8e6e4); display: grid; place-items: center; }
.thumb::before { content: ""; width: 5px; height: 8px; background: repeating-linear-gradient(#aaa 0 1px, transparent 1px 3px); }
.short { height: 84px; }
.long { height: 291px; }
.hgrip { width: 9px; height: 7px; margin: 0 auto; flex: none; background: repeating-linear-gradient(90deg, #bbb 0 1px, transparent 1px 3px) center / 8px 4px no-repeat; }
.propbox { flex: 1; min-height: 0; display: flex; gap: 3px; border: 1px solid #b5b1ab; border-right: 0; border-radius: 3px; padding: 0 0 0 1px; }
.props { width: 237px; border: 1px solid #bbb7b2; background: #fff; overflow: hidden; }
table { width: 235px; border-collapse: separate; border-spacing: 0; table-layout: fixed; }
th { height: 26px; padding: 0 4px; text-align: left; font-weight: 400; background: linear-gradient(#fff, #f3f2f1); border-bottom: 2px solid #bbb7b2; }
th:first-child { width: 126px; border-right: 1px solid #c8c5c2; }
td { height: 20px; padding: 0 0 0 3px; line-height: 19px; white-space: nowrap; border-bottom: 1px solid #c8c8c8; }
td:first-child { padding-left: 23px; border-right: 1px solid #c8c8c8; }
.alt td { background: #efefef; }
.grp td { background: #c9c7c5; color: #fff; font-weight: 700; border-color: #c9c7c5; }
.sel td { background: #e0dfdd; color: #222; }
.sel td:last-child { padding: 0; background: #fff; }
.cell { height: 19px; margin: 0 1px; padding: 0 4px; }
.chip { display: inline-block; width: 24px; height: 19px; margin-right: 7px; background: #000; vertical-align: top; }
.btabs { height: 29px; display: flex; gap: 2px; flex: none; }
.bt { width: 48px; height: 29px; display: grid; place-items: center; }
.bt svg, .bt span { grid-area: 1 / 1; }
.bt svg { width: 48px; height: 29px; }

.vsplit { width: 6px; flex: none; background: repeating-linear-gradient(#bbb 0 1px, transparent 1px 3px) center / 4px 8px no-repeat; }
.work { flex: 1; min-width: 0; display: flex; flex-direction: column; }
.view { flex: 1; width: 100%; min-height: 0; }
.mdi { height: 33px; display: flex; align-items: flex-start; border-top: 1px solid #b5b1ab; flex: none; }
.doc { height: 29px; width: 148px; display: flex; align-items: center; padding: 0 10px 0 6px; border: 1px solid #b5b1ab; border-top: 0; border-radius: 0 0 4px 4px; background: linear-gradient(#dcd9d6, #f2f1f0); }
.doc.on { height: 32px; width: 215px; background: linear-gradient(#f6f5f4, #fff); }
.doc span { margin: 0 auto; white-space: nowrap; }
.cx { width: 14px; height: 14px; }
.snap { width: 30px; display: flex; flex-direction: column; align-items: center; gap: 2px; flex: none; padding-top: 3px; }
.snap .hgrip { margin-bottom: 0; }
.snap button { width: 24px; height: 24px; display: grid; place-items: center; border: 1px solid #b5b1ab; border-radius: 4px; background: linear-gradient(#fff, #f4f3f2); }
.snap button.dn { background: #e4e2e0; }
.snap button svg { width: 16px; height: 16px; }
.so, .sg { fill: none; stroke: #0c3c34; stroke-width: 4; }
.sg { stroke: #0aa67c; stroke-width: 2; }
.dot { fill: #0aa67c; stroke: #0c3c34; stroke-width: 1; }
.status { height: 30px; flex: none; border-top: 1px solid #c8c5c2; text-align: right; padding: 5px 2px 0 0; }

.minor { fill: none; stroke: #2a2a48; stroke-opacity: .27; stroke-width: 1; }
.major { fill: none; stroke: #22223c; stroke-opacity: .55; stroke-width: 1; }
.e { stroke: #16161a; stroke-width: 2; stroke-linejoin: round; }
path.e { fill: none; }
.dims path { fill: none; stroke: #000; stroke-width: 2; }
.dims .ar { marker-start: url(#ah); marker-end: url(#ah); }
.dims .f { fill: #111; stroke: none; }
.tip { fill: #111; }
.blue-tip { fill: #157cb4; }
.blue path { fill: none; stroke: #10a0ff; stroke-width: 2; }
.blue .bar2 { stroke-width: 3; marker-start: url(#ab); marker-end: url(#ab); }
.lab text { font-family: "DejaVu Sans", sans-serif; font-weight: 400; fill: #111; fill-opacity: .85; }
.lab .t17 { font-size: 17px; }
.lab .t20 { font-size: 20px; }
.lab .tb2 { fill: #1787cc; }
.axis path { stroke-width: 1; }
.axis text { font: 10px "Liberation Sans", sans-serif; fill: #111; }
```
FILE: grid.js
```js
// Ground grid: 100 x 100 mm, one line per millimetre, a darker one every 10.
const origin = [422, 234];
const u = [7.02, 1.71];
const v = [-2.87, 4.3];
const at = (a, b) => [origin[0] + a * u[0] + b * v[0], origin[1] + a * u[1] + b * v[1]].map(n => n.toFixed(1)).join(' ');
let minor = '';
let major = '';
for (let i = 0; i <= 100; i++) {
  const d = `M${at(i, 0)}L${at(i, 100)}M${at(0, i)}L${at(100, i)}`;
  if (i % 10) minor += d; else major += d;
}
document.getElementById('minor').setAttribute('d', minor);
document.getElementById('major').setAttribute('d', major);
```
